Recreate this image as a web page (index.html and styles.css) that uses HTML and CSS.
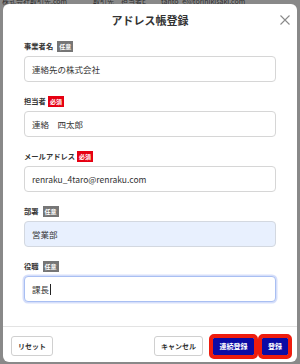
FILE: index.html
```html
<!DOCTYPE html>
<html lang="ja">
<head>
<meta charset="utf-8">
<link rel="stylesheet" href="styles.css">
</head>
<body>
<div class="page">
  <div class="bgrow">
    <span class="c1">株式会社取引先.com</span>
    <span class="c2">取引先　担当者E</span>
    <span class="c3">tanto_e@torihikisaki.com</span>
  </div>
</div>
<div class="modal">
  <div class="header">
    <h1 class="title">アドレス帳登録</h1>
    <span class="close">
      <svg width="10" height="10" viewBox="0 0 10 10"><path d="M0.5 0.5L9.5 9.5M9.5 0.5L0.5 9.5" stroke="#8a8a8a" stroke-width="1.1" fill="none"/></svg>
    </span>
  </div>
  <div class="body">
    <div class="field">
      <div class="label">事業者名<span class="badge opt">任意</span></div>
      <div class="input">連絡先の株式会社</div>
    </div>
    <div class="field">
      <div class="label">担当者<span class="badge req">必須</span></div>
      <div class="input">連絡　四太郎</div>
    </div>
    <div class="field">
      <div class="label">メールアドレス<span class="badge req">必須</span></div>
      <div class="input">renraku_4taro@renraku.com</div>
    </div>
    <div class="field">
      <div class="label">部署<span class="badge opt">任意</span></div>
      <div class="input filled">営業部</div>
    </div>
    <div class="field">
      <div class="label">役職<span class="badge opt">任意</span></div>
      <div class="input focus">課長<span class="caret"></span></div>
    </div>
  </div>
  <div class="footer">
    <button class="btn">リセット</button>
    <div class="spacer"></div>
    <button class="btn">キャンセル</button>
    <button class="btn primary wide">連続登録</button>
    <button class="btn primary">登録</button>
  </div>
</div>
</body>
</html>
```
FILE: styles.css
```css
* { box-sizing: border-box; }
html, body { margin: 0; padding: 0; }
body {
  width: 300px;
  height: 364px;
  background: #898989;
  font-family: "Noto Sans CJK JP", "Noto Sans", sans-serif;
  overflow: hidden;
  position: relative;
}
.page { padding: 0 2px; }
.bgrow {
  display: flex;
  height: 8px;
  font-size: 7px;
  line-height: 8px;
  color: #2e2e2e;
  white-space: nowrap;
  margin-top: -3px;
}
.c1 { width: 91px; }
.c2 { width: 68px; }
.modal {
  position: absolute;
  left: 3px;
  top: 4px;
  width: 294px;
  background: #fff;
  border-radius: 6px;
  display: flex;
  flex-direction: column;
}
.header {
  height: 30px;
  display: flex;
  align-items: center;
  justify-content: center;
  position: relative;
}
.title {
  margin: 2px 0 0;
  font-size: 11px;
  font-weight: 700;
  color: #333;
  letter-spacing: 0;
}
.close {
  position: absolute;
  right: 7px;
  top: 11px;
  width: 10px;
  height: 10px;
  display: flex;
}
.body {
  padding: 6px 21px 24px;
  display: flex;
  flex-direction: column;
  gap: 13px;
}
.field {
  display: flex;
  flex-direction: column;
  gap: 4px;
}
.label {
  height: 12px;
  display: flex;
  align-items: center;
  font-size: 7.3px;
  font-weight: 700;
  color: #333;
}
.badge {
  margin-left: 3px;
  height: 11px;
  padding: 0 2px;
  display: inline-flex;
  align-items: center;
  font-size: 6px;
  font-weight: 700;
  color: #fff;
}
.badge.opt { background: #767676; margin-left: 4px; }
.badge.req { background: #e60012; margin-left: 2px; }
.input {
  height: 26px;
  border: 1px solid #d6d6d6;
  border-radius: 4px;
  padding: 0 7px;
  display: flex;
  align-items: center;
  font-size: 8.5px;
  color: #333;
  background: #fff;
}
.input.filled { background: #e8f0fe; border-color: #d3d8e0; }
.input.focus {
  border-color: #a9bff2;
  box-shadow: 0 0 0 1.5px rgba(120, 150, 240, 0.3);
}
.caret {
  display: inline-block;
  width: 1px;
  height: 11px;
  background: #222;
  margin-left: 0.5px;
}
.footer {
  border-top: 1px solid #e3e3e3;
  padding: 9px 9px 6px 8px;
  display: flex;
  align-items: center;
}
.spacer { flex: 1; }
.btn {
  font-family: "Noto Sans CJK JP", "Noto Sans", sans-serif;
  height: 20px;
  padding: 0 6px;
  border: 1px solid #d0d0d0;
  border-radius: 3px;
  background: #fff;
  font-size: 7px;
  font-weight: 700;
  color: #333;
  display: flex;
  align-items: center;
  justify-content: center;
  margin: 0;
}
.btn + .btn { margin-left: 10px; }
.btn.primary {
  height: 17px;
  background: #0b0ba5;
  border: none;
  border-radius: 1px;
  color: #fff;
  outline: 4px solid #ee1c0e;
  padding: 0 5px;
  width: 26px;
}
.btn.primary.wide { width: 41px; }
.btn.primary + .btn.primary { margin-left: 8px; }
```
